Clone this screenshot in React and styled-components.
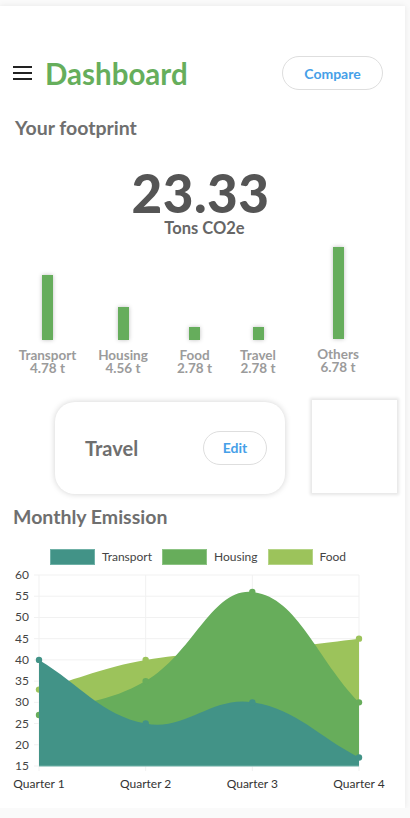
import React from "react";
import styled, { createGlobalStyle } from "styled-components";

const GlobalStyle = createGlobalStyle`
  html, body {
    margin: 0;
    padding: 0;
    background: #fafafa;
    font-family: Lato, "Open Sans", sans-serif;
  }
`;

const Page = styled.div`
  width: 405px;
  height: 802px;
  margin-top: 6px;
  background: #fff;
  box-shadow: 0 0 6px rgba(0, 0, 0, 0.08);
  overflow: hidden;
`;

const Header = styled.div`
  display: flex;
  align-items: center;
  height: 34px;
  margin-top: 50px;
  padding: 0 22px 0 13px;
`;

const Burger = styled.div`
  width: 19px;
  display: flex;
  flex-direction: column;
  gap: 4px;
  margin-right: 13px;

  span {
    height: 2px;
    background: #222;
  }
`;

const Title = styled.h1`
  margin: 0;
  flex: 1;
  font-size: 29.5px;
  font-weight: 700;
  color: #66ae5c;
`;

const PillButton = styled.button`
  height: ${(p) => p.h}px;
  width: ${(p) => p.w}px;
  border-radius: 20px;
  border: 1px solid #dedede;
  background: #fff;
  color: #46a0e8;
  font-family: inherit;
  font-weight: 700;
  font-size: 14px;
  cursor: pointer;
`;

const SectionTitle = styled.h2`
  margin: ${(p) => p.m};
  font-size: 19.5px;
  font-weight: 700;
  color: #6f6f6f;
`;

const Total = styled.div`
  text-align: center;
  margin-top: 27px;
  padding-right: 4px;
  line-height: 1;
  color: #555;

  strong {
    display: block;
    font-size: 53px;
    font-weight: 900;
    letter-spacing: 0.5px;
  }

  span {
    display: block;
    margin-top: 1px;
    padding-left: 8px;
    font-size: 16.5px;
    font-weight: 700;
    color: #666;
  }
`;

const Bars = styled.div`
  display: flex;
  padding-left: 10px;
  margin-top: 18px;
  height: 120px;
  align-items: flex-end;
`;

const BarItem = styled.div`
  width: ${(p) => p.w}px;
  display: flex;
  flex-direction: column;
  align-items: center;
  padding-bottom: ${(p) => p.lift}px;
`;

const Bar = styled.div`
  width: 11px;
  height: ${(p) => p.h}px;
  background: #66ad5c;
  box-shadow: 0 0 4px rgba(0, 0, 0, 0.25);
  margin-bottom: 9px;
`;

const BarLabel = styled.div`
  font-size: 13.5px;
  font-weight: 700;
  color: #9b9b9b;
  line-height: 13px;
  height: 13px;
  text-align: center;
  white-space: nowrap;
`;

const Carousel = styled.div`
  display: flex;
  gap: 27px;
  padding-left: 55px;
  margin-top: 25px;
`;

const CategoryCard = styled.div`
  flex: none;
  width: 230px;
  height: 92px;
  border-radius: 20px;
  background: #fff;
  box-shadow: 0 0 6px rgba(0, 0, 0, 0.18);
  display: flex;
  align-items: center;
  justify-content: space-between;
  padding: 0 18px 0 30px;
  box-sizing: border-box;
  margin-top: 2px;

  h3 {
    margin: 0;
    font-size: 20px;
    font-weight: 700;
    color: #6f6f6f;
  }
`;

const BlankCard = styled.div`
  flex: none;
  width: 85px;
  height: 93px;
  background: #fff;
  box-shadow: 0 0 3px 2px rgba(0, 0, 0, 0.1);
`;

const Legend = styled.div`
  display: flex;
  justify-content: center;
  gap: 10px;
  margin: 21px 9px 0 0;
  font-size: 12px;
  color: #444;
`;

const LegendItem = styled.div`
  display: flex;
  align-items: center;
  gap: 7px;

  i {
    width: 43px;
    height: 14px;
    background: ${(p) => p.c};
    border: 1px solid ${(p) => p.b};
  }
`;

const ChartSvg = styled.svg`
  display: block;
  margin-top: 0;
`;

const bars = [
  { name: "Transport", value: "4.78 t", h: 65, w: 75, lift: 0 },
  { name: "Housing", value: "4.56 t", h: 33, w: 76, lift: 0 },
  { name: "Food", value: "2.78 t", h: 13, w: 67, lift: 0 },
  { name: "Travel", value: "2.78 t", h: 13, w: 60, lift: 0 },
  { name: "Others", value: "6.78 t", h: 92, w: 100, lift: 1 },
];

const series = [
  { name: "Food", color: "#9cc35b", border: "#b5d486", data: [33, 40, 42, 45] },
  { name: "Housing", color: "#67ad5b", border: "#8cc383", data: [27, 35, 56, 30] },
  { name: "Transport", color: "#429387", border: "#6fb0a6", data: [40, 25, 30, 17] },
];

// chart geometry
const X0 = 39;
const X1 = 359;
const TOP = 10;
const BOTTOM = 201;
const xAt = (i) => X0 + ((X1 - X0) / 3) * i;
const yAt = (v) => BOTTOM - ((v - 15) / 45) * (BOTTOM - TOP);

// chart.js style spline, tension 0.4
const splinePath = (data) => {
  const pts = data.map((v, i) => ({ x: xAt(i), y: yAt(v) }));
  const t = 0.4;
  const ctrl = pts.map((cur, i) => {
    const prev = pts[i - 1] || cur;
    const next = pts[i + 1] || cur;
    const d01 = Math.hypot(cur.x - prev.x, cur.y - prev.y);
    const d12 = Math.hypot(next.x - cur.x, next.y - cur.y);
    let s01 = d01 / (d01 + d12);
    let s12 = d12 / (d01 + d12);
    s01 = isNaN(s01) ? 0 : s01;
    s12 = isNaN(s12) ? 0 : s12;
    const fa = t * s01;
    const fb = t * s12;
    return {
      p: { x: cur.x - fa * (next.x - prev.x), y: cur.y - fa * (next.y - prev.y) },
      n: { x: cur.x + fb * (next.x - prev.x), y: cur.y + fb * (next.y - prev.y) },
    };
  });
  const clamp = (y) => Math.min(BOTTOM, Math.max(TOP, y));
  let d = `M${pts[0].x},${pts[0].y}`;
  for (let i = 1; i < pts.length; i++) {
    const a = ctrl[i - 1].n;
    const b = ctrl[i].p;
    d += ` C${a.x},${clamp(a.y)} ${b.x},${clamp(b.y)} ${pts[i].x},${pts[i].y}`;
  }
  return { d: `${d} L${X1},${BOTTOM} L${X0},${BOTTOM} Z`, pts };
};

const ticks = [60, 55, 50, 45, 40, 35, 30, 25, 20, 15];

const EmissionChart = () => (
  <ChartSvg width="405" height="230" viewBox="0 0 405 230">
    {ticks.map((v) => (
      <line key={v} x1={X0 - 5} x2={X1} y1={yAt(v)} y2={yAt(v)} stroke="#f1f1f1" />
    ))}
    {[0, 1, 2, 3].map((i) => (
      <line key={i} x1={xAt(i)} x2={xAt(i)} y1={TOP} y2={BOTTOM + 5} stroke="#f1f1f1" />
    ))}
    {series.map((s) => {
      const { d, pts } = splinePath(s.data);
      return (
        <g key={s.name}>
          <path d={d} fill={s.color} />
          {pts.map((p, i) => (
            <circle key={i} cx={p.x} cy={p.y} r="3.2" fill={s.color} />
          ))}
        </g>
      );
    })}
    <line x1={X0} x2={X1} y1={BOTTOM} y2={BOTTOM} stroke="#6fb0a6" strokeWidth="1" />
    {ticks.map((v) => (
      <text key={v} x="29" y={yAt(v) + 4} fontSize="12" fill="#444" textAnchor="end" fontFamily="Lato, sans-serif">
        {v}
      </text>
    ))}
    {["Quarter 1", "Quarter 2", "Quarter 3", "Quarter 4"].map((q, i) => (
      <text key={q} x={xAt(i)} y="223" fontSize="12" fill="#333" textAnchor="middle" fontFamily="Lato, sans-serif">
        {q}
      </text>
    ))}
  </ChartSvg>
);

export default function App() {
  return (
    <Page>
      <GlobalStyle />
      <Header>
        <Burger>
          <span />
          <span />
          <span />
        </Burger>
        <Title>Dashboard</Title>
        <PillButton w={101} h={34}>Compare</PillButton>
      </Header>

      <SectionTitle m="26px 0 0 15px">Your footprint</SectionTitle>

      <Total>
        <strong>23.33</strong>
        <span>Tons CO2e</span>
      </Total>

      <Bars>
        {bars.map((b) => (
          <BarItem key={b.name} w={b.w} lift={b.lift}>
            <Bar h={b.h} />
            <BarLabel>{b.name}</BarLabel>
            <BarLabel>{b.value}</BarLabel>
          </BarItem>
        ))}
      </Bars>

      <Carousel>
        <CategoryCard>
          <h3>Travel</h3>
          <PillButton w={64} h={34}>Edit</PillButton>
        </CategoryCard>
        <BlankCard />
      </Carousel>

      <SectionTitle m="11px 0 0 13px">Monthly Emission</SectionTitle>

      <Legend>
        {[...series].reverse().map((s) => (
          <LegendItem key={s.name} c={s.color} b={s.border}>
            <i />
            {s.name}
          </LegendItem>
        ))}
      </Legend>

      <EmissionChart />
    </Page>
  );
}
